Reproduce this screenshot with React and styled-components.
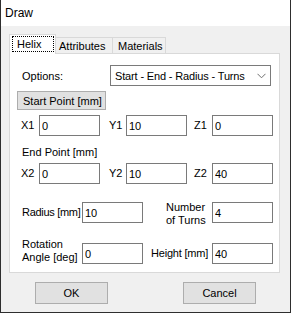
import React from "react";
import styled, { createGlobalStyle } from "styled-components";

const Global = createGlobalStyle`
  html, body { margin: 0; padding: 0; background: #f0f0f0; }
  body {
    font-family: "Liberation Sans", Arial, sans-serif;
    font-size: 11px;
    color: #000;
  }
  * { box-sizing: border-box; }
`;

const Window = styled.div`
  width: 291px;
  height: 313px;
  background: #f0f0f0;
  border: 1px solid #2e2e2e;
  border-top: none;
  display: flex;
  flex-direction: column;
`;

const TitleBar = styled.div`
  height: 26px;
  flex: none;
  background: #fff;
  display: flex;
  align-items: center;
  padding-left: 4px;
  font-size: 12px;
`;

const Body = styled.div`
  padding: 8px 10px 0 8px;
  display: flex;
  flex-direction: column;
`;

const TabStrip = styled.div`
  height: 19px;
  display: flex;
  align-items: flex-start;
`;

const Tab = styled.div`
  position: relative;
  z-index: ${(p) => (p.$active ? 2 : 1)};
  width: ${(p) => p.$w}px;
  height: ${(p) => (p.$active ? 20 : 16)}px;
  margin-top: ${(p) => (p.$active ? 0 : 3)}px;
  margin-left: ${(p) => (p.$first ? 0 : -1)}px;
  background: ${(p) => (p.$active ? "#fff" : "#f0f0f0")};
  border: 1px solid #d9d9d9;
  border-bottom: none;
  display: flex;
  align-items: center;
  padding: ${(p) => (p.$active ? "1px 1px 2px 2px" : `0 0 0 ${p.$pad}px`)};
`;

const FocusRing = styled.div`
  flex: 1;
  align-self: stretch;
  border: 1px dotted #000;
  display: flex;
  align-items: center;
  padding-left: 4px;
`;

const Panel = styled.div`
  position: relative;
  z-index: 1;
  width: 271px;
  background: #fff;
  border: 1px solid #d9d9d9;
  padding: 0 6px 8px 7px;
  display: flex;
  flex-direction: column;
`;

const OptionsRow = styled.div`
  margin-top: 11px;
  height: 21px;
  display: flex;
  align-items: center;
`;

const OptionsLabel = styled.div`
  width: 93px;
  padding-left: 5px;
`;

const Combo = styled.div`
  width: 161px;
  height: 21px;
  border: 1px solid #7a7a7a;
  background: #fff;
  display: flex;
  align-items: center;
  justify-content: space-between;
  padding: 0 4px 0 4px;
`;

const ComboText = styled.span`
  letter-spacing: -0.15px;
`;

const SectionButton = styled.div`
  margin-top: 5px;
  width: 89px;
  height: 19px;
  background: #e1e1e1;
  border: 1px solid #adadad;
  display: flex;
  align-items: center;
  padding-left: 5px;
`;

const SectionLabel = styled.div`
  margin-top: 8px;
  height: 16px;
  line-height: 16px;
  padding-left: 5px;
`;

const Grid = styled.div`
  margin-top: ${(p) => p.$mt}px;
  height: 21px;
  display: grid;
  grid-template-columns: ${(p) => p.$cols};
  grid-template-rows: 21px;
  align-items: center;
`;

const Label = styled.div`
  padding-left: ${(p) => p.$pl}px;
  line-height: 13px;
  white-space: nowrap;
  letter-spacing: ${(p) => p.$ls || 0}px;
  align-self: ${(p) => p.$align || "center"};
  padding-top: ${(p) => p.$pt || 0}px;
`;

const Field = styled.input`
  width: 61px;
  height: 21px;
  border: 1px solid #7a7a7a;
  background: #fff;
  padding: 0 0 0 2px;
  margin: 0;
  font: inherit;
  color: #000;
  outline: none;
`;

const ButtonRow = styled.div`
  margin-top: 9px;
  display: flex;
`;

const DialogButton = styled.div`
  width: 73px;
  height: 22px;
  margin-left: ${(p) => p.$ml}px;
  background: #e1e1e1;
  border: 1px solid #adadad;
  display: flex;
  align-items: center;
  justify-content: center;
`;

const Chevron = () => (
  <svg width="9" height="6" viewBox="0 0 9 6">
    <polyline points="0.5,0.8 4.5,4.8 8.5,0.8" fill="none" stroke="#707070" strokeWidth="1" />
  </svg>
);

const xyzCols = "22px 61px 26px 61px 25px 61px";

export default function App() {
  return (
    <>
      <Global />
      <Window>
        <TitleBar>Draw</TitleBar>
        <Body>
          <TabStrip>
            <Tab $active $first $w={47}>
              <FocusRing>Helix</FocusRing>
            </Tab>
            <Tab $w={58} $pad={3}>Attributes</Tab>
            <Tab $w={54} $pad={5}>Materials</Tab>
          </TabStrip>
          <Panel>
            <OptionsRow>
              <OptionsLabel>Options:</OptionsLabel>
              <Combo>
                <ComboText>Start - End - Radius - Turns</ComboText>
                <Chevron />
              </Combo>
            </OptionsRow>
            <SectionButton>Start Point [mm]</SectionButton>
            <Grid $mt={5} $cols={xyzCols}>
              <Label $pl={4}>X1</Label>
              <Field defaultValue="0" />
              <Label $pl={9}>Y1</Label>
              <Field defaultValue="10" />
              <Label $pl={7}>Z1</Label>
              <Field defaultValue="0" />
            </Grid>
            <SectionLabel>End Point [mm]</SectionLabel>
            <Grid $mt={3} $cols={xyzCols}>
              <Label $pl={4}>X2</Label>
              <Field defaultValue="0" />
              <Label $pl={9}>Y2</Label>
              <Field defaultValue="10" />
              <Label $pl={7}>Z2</Label>
              <Field defaultValue="40" />
            </Grid>
            <Grid $mt={18} $cols="65px 61px 69px 61px">
              <Label $pl={5} $ls={-0.3}>Radius [mm]</Label>
              <Field defaultValue="10" />
              <Label $pl={23} $pt={2}>
                Number
                <br />
                of Turns
              </Label>
              <Field defaultValue="4" />
            </Grid>
            <Grid $mt={20} $cols="65px 61px 69px 61px">
              <Label $pl={5} $align="end">
                Rotation
                <br />
                Angle [deg]
              </Label>
              <Field defaultValue="0" />
              <Label $pl={8} $ls={-0.2}>Height [mm]</Label>
              <Field defaultValue="40" />
            </Grid>
          </Panel>
          <ButtonRow>
            <DialogButton $ml={26}>OK</DialogButton>
            <DialogButton $ml={75}>Cancel</DialogButton>
          </ButtonRow>
        </Body>
      </Window>
    </>
  );
}
